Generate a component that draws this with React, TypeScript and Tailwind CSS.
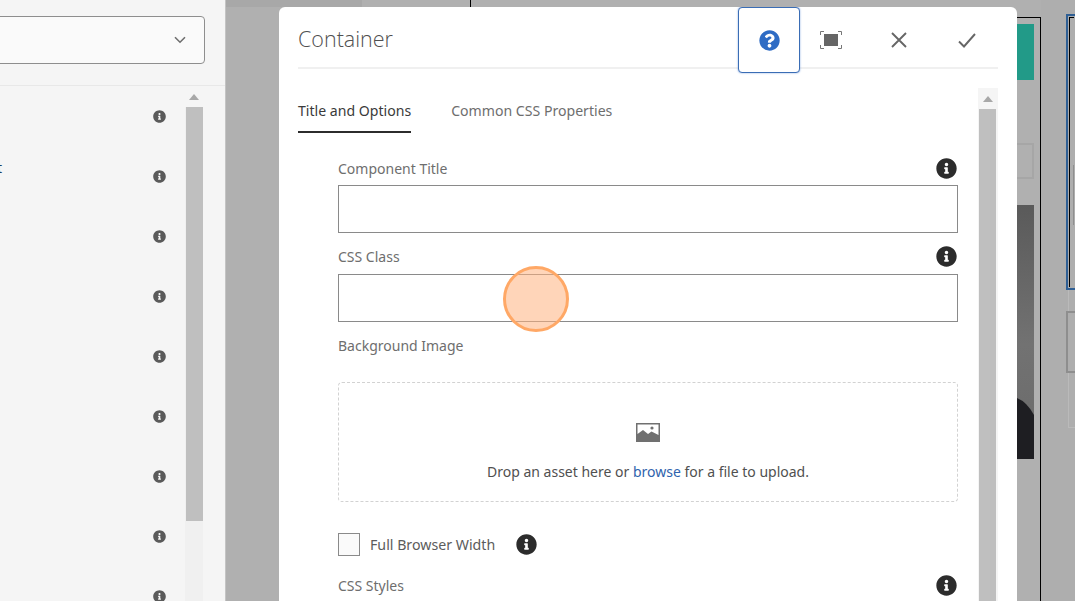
import { FaInfoCircle, FaQuestionCircle } from 'react-icons/fa';

const sidebarRows = [0, 1, 2, 3, 4, 5, 6, 7, 8];

const Field = ({ label }: { label: string }) => (
  <div className="flex h-[22px] items-center justify-between pr-[1px]">
    <span className="text-[14px] text-[#6e6e6e]">{label}</span>
    <FaInfoCircle className="text-[21px] text-[#2c2c2c]" />
  </div>
);

const ScrollArrow = () => (
  <svg width="10" height="6" viewBox="0 0 10 6">
    <path d="M5 0 L10 6 H0 Z" fill="#a8a8a8" />
  </svg>
);

const App = () => {
  return (
    <div
      className="relative flex h-[601px] w-[1075px] overflow-hidden bg-[#b0b0b0]"
      style={{ fontFamily: '"Noto Sans", "Open Sans", sans-serif' }}
    >
      {/* left rail, cut off by the window */}
      <aside className="flex w-[226px] shrink-0 flex-col border-r border-[#c4c4c4] bg-[#f5f5f5]">
        <div className="mt-[16px] ml-[-10px] flex h-[48px] w-[215px] items-center justify-end rounded-[4px] border border-[#8e8e8e] bg-[#fafafa] pr-[18px]">
          <svg width="12" height="8" viewBox="0 0 12 8" fill="none" stroke="#6e6e6e" strokeWidth="1.6">
            <path d="M1 1.2 L6 6.2 L11 1.2" />
          </svg>
        </div>
        <div className="mt-[21px] flex min-h-0 flex-1 border-t border-[#e8e8e8] pr-[22px]">
          <div className="relative w-[185px] overflow-hidden">
            {sidebarRows.map((row) => (
              <div key={row} className="flex h-[60px] items-center justify-end pr-[19px] pt-[1px]">
                <FaInfoCircle className="text-[13px] text-[#5a5a5a]" />
              </div>
            ))}
            <span className="absolute top-[71px] left-[-3px] text-[14px] text-[#1f3f60]">t</span>
          </div>
          <div className="flex w-[18px] flex-col bg-[#f0f0f0]">
            <div className="flex h-[21px] items-center justify-center bg-[#f5f5f5] pt-[1px]">
              <ScrollArrow />
            </div>
            <div className="ml-[1px] h-[414px] w-[17px] bg-[#bfbfbf]" />
          </div>
        </div>
      </aside>

      {/* dimmed page behind the dialog */}
      <div className="flex min-w-0 flex-1">
        <div className="h-[7px] w-[136px] bg-[#a8a8a8]" />
        <div className="h-[7px] w-[109px] border-r border-black" />
        <div className="h-[7px] w-[546px]" />
        <div className="flex w-[24px] flex-col pt-[17px]">
          <div className="flex h-full flex-col border-t border-r border-black pt-[6px]">
            <div className="h-[56px] w-[17px] bg-[#229a88]" />
            <div className="mt-[63px] h-[36px] w-[17px] border-2 border-l-0 border-[#a6a6a6]" />
            <svg className="mt-[26px] shrink-0" width="17" height="254" viewBox="0 0 17 254">
              <defs>
                <linearGradient id="photo" x1="0" y1="0" x2="0" y2="1">
                  <stop offset="0" stopColor="#5a5a5a" />
                  <stop offset="0.55" stopColor="#727272" />
                  <stop offset="1" stopColor="#6a6a6a" />
                </linearGradient>
              </defs>
              <rect width="17" height="254" fill="url(#photo)" />
              <path d="M0 193 Q10 197 17 210 V254 H0 Z" fill="#1e1e22" />
            </svg>
          </div>
        </div>
        <div className="flex-1 bg-[#aeaeae] pl-[25px] pt-[14px]">
          <div className="h-[276px] border-2 border-r-0 border-[#2f5f94] p-[1px]">
            <div className="h-full border-t border-l border-black pl-[3px] pt-[147px]">
              <div className="h-[60px] bg-[#8f8f8f]" />
            </div>
          </div>
          <div className="ml-[2px] h-[21px] border-l border-[#bababa]" />
          <div className="h-[62px] border-2 border-r-0 border-[#8e8e8e]" />
          <div className="ml-[2px] h-[55px] border-b border-l border-[#bababa]" />
        </div>
      </div>

      {/* dialog */}
      <div className="absolute top-[7px] left-[279px] flex h-[600px] w-[738px] flex-col overflow-hidden rounded-t-[6px] bg-white">
        <header className="mx-[19px] flex h-[62px] shrink-0 items-start border-b-2 border-[#f0f0f0]">
          <h1 className="flex-1 pt-[15px] text-[21.5px] leading-[34px] font-light text-[#505050]" style={{ fontFamily: '"Open Sans", sans-serif' }}>
            Container
          </h1>
          <button className="relative z-10 flex h-[66px] w-[62px] shrink-0 items-center justify-center rounded-[4px] border border-[#3a6db5] bg-white shadow-[0_0_2px_#7fa3dc]">
            <FaQuestionCircle className="text-[21px] text-[#2f6cc4]" />
          </button>
          <button className="flex h-[66px] w-[62px] shrink-0 items-center justify-center">
            <svg width="22" height="18" viewBox="0 0 22 18" fill="none" stroke="#777" strokeWidth="1">
              <path d="M0.5 4 V0.5 H4 M18 0.5 H21.5 V4 M0.5 14 V17.5 H4 M18 17.5 H21.5 V14" />
              <rect x="4" y="3" width="14" height="12" fill="#666" stroke="none" />
            </svg>
          </button>
          <button className="ml-[3px] flex h-[66px] w-[68px] shrink-0 items-center justify-center">
            <svg width="16" height="16" viewBox="0 0 16 16" fill="none" stroke="#666" strokeWidth="1.9">
              <path d="M1 1 L15 15 M15 1 L1 15" />
            </svg>
          </button>
          <button className="-mr-[3px] flex h-[66px] w-[68px] shrink-0 items-center justify-center">
            <svg width="18" height="15" viewBox="0 0 18 15" fill="none" stroke="#666" strokeWidth="1.9">
              <path d="M1 8.5 L6 13.5 L17 1" />
            </svg>
          </button>
        </header>

        <div className="mt-[19px] flex min-h-0 flex-1 px-[19px]">
          <div className="min-w-0 flex-1">
            <nav className="flex h-[45px] gap-[40px] text-[14.1px]">
              <div className="flex h-[45px] items-center border-b-2 border-[#2c2c2c] pt-[3px] text-[#3a3a3a]">Title and Options</div>
              <div className="flex h-[45px] items-center border-b-2 border-transparent pt-[3px] text-[#6e6e6e]">Common CSS Properties</div>
            </nav>

            <div className="pt-[24px] pr-[20px] pl-[40px]">
              <Field label="Component Title" />
              <div className="mt-[6px] h-[48px] border border-[#8a8a8a] bg-white" />

              <div className="mt-[12px]">
                <Field label="CSS Class" />
              </div>
              <div className="mt-[7px] h-[48px] border border-[#8a8a8a] bg-white" />

              <div className="mt-[12px] flex h-[22px] items-center text-[14px] text-[#6e6e6e]">Background Image</div>

              <div className="mt-[26px] flex h-[120px] flex-col items-center rounded-[4px] border border-dashed border-[#d2d2d2] pt-[40px]">
                <svg width="24" height="19" viewBox="0 0 24 19">
                  <path fillRule="evenodd" fill="#707070" d="M0 0 H24 V19 H0 Z M1.5 1.5 V11 L7 7 L12 11 L15.5 8.5 L22.5 12 V1.5 Z" />
                  <circle cx="16" cy="5" r="1.6" fill="#707070" />
                </svg>
                <p className="mt-[20px] text-[14px] leading-[20px] text-[#505050]">
                  Drop an asset here or <span className="text-[#2f63ad]">browse</span> for a file to upload.
                </p>
              </div>

              <div className="mt-[31px] flex h-[23px] items-center">
                <div className="h-[23px] w-[22px] border border-[#8a8a8a] bg-[#fafafa]" />
                <span className="ml-[10px] pt-[1px] text-[14.2px] text-[#5c5c5c]">Full Browser Width</span>
                <FaInfoCircle className="ml-[21px] text-[21px] text-[#2c2c2c]" />
              </div>

              <div className="mt-[18px]">
                <Field label="CSS Styles" />
              </div>
            </div>
          </div>

          <div className="flex w-[20px] shrink-0 flex-col bg-[#f5f5f5] pl-[1px] pr-[2px]">
            <div className="flex h-[21px] items-center justify-center pt-[1px]">
              <ScrollArrow />
            </div>
            <div className="flex-1 bg-[#bfbfbf]" />
          </div>
        </div>
      </div>

      {/* click marker from the recording */}
      <div className="absolute top-[266px] left-[503px] h-[66px] w-[66px] rounded-full border-[3px] border-[#ffa866] bg-[#ffb27f]/55" />
    </div>
  );
};

export default App;
